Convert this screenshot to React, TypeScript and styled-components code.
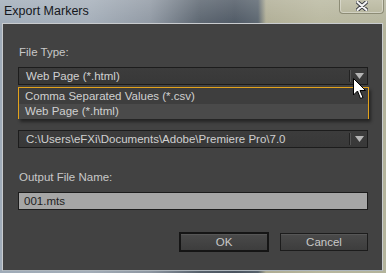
import React from "react";
import styled, { createGlobalStyle } from "styled-components";

const Global = createGlobalStyle`
  html, body { margin: 0; padding: 0; }
  body { width: 386px; height: 273px; overflow: hidden; font-family: "Liberation Sans", Arial, sans-serif; }
`;

const Window = styled.div`
  position: relative;
  width: 386px;
  height: 273px;
  box-sizing: border-box;
  display: flex;
  flex-direction: column;
  background:
    linear-gradient(180deg, rgba(255,255,255,0.18) 0px, rgba(255,255,255,0) 30px),
    linear-gradient(90deg, #9fabb8 0px, #a2acb7 90px, #8d96a1 150px, #56606b 200px, #4a5460 235px, #56616b 258px, #aeac93 266px, #b7b69d 320px, #b3b39b 386px);
  padding: 0 3px 2px 2px;
`;

const TitleBar = styled.div`
  height: 23px;
  display: flex;
  align-items: flex-start;
  justify-content: space-between;
  flex-shrink: 0;
`;

const Title = styled.div`
  font-family: "Liberation Sans", Arial, sans-serif;
  font-size: 12.5px;
  color: #15171c;
  padding: 3px 0 0 2px;
  line-height: 16px;
`;

const CloseButton = styled.div`
  width: 45px;
  height: 15px;
  margin-top: -1px;
  margin-right: -1px;
  box-sizing: border-box;
  border: 1px solid #8d8c76;
  border-top: none;
  border-radius: 0 0 4px 4px;
  background: linear-gradient(180deg, #c6c5b0 0%, #b9b8a0 100%);
  box-shadow: inset 0 0 0 1px rgba(255,255,255,0.35);
  display: flex;
  align-items: center;
  justify-content: center;
`;

const Body = styled.div`
  flex: 1;
  position: relative;
  background: #424242;
  border: 1px solid #c9cccf;
  border-bottom-color: #aeb6bd;
  padding: 21px 14px 0 15px;
  display: flex;
  flex-direction: column;
`;

const Field = styled.div<{ $top: number }>`
  position: relative;
  display: flex;
  flex-direction: column;
  gap: 8px;
  margin-top: ${(p) => p.$top}px;
`;

const Label = styled.div`
  font-size: 11.5px;
  line-height: 14px;
  color: #c8c8c8;
  padding-left: 1px;
`;

const SelectBox = styled.div`
  height: 18px;
  box-sizing: border-box;
  border: 1px solid #1c1c1c;
  background: linear-gradient(180deg, #3c3c3c 0%, #383838 100%);
  display: flex;
  align-items: center;
  font-size: 11.5px;
  color: #d0d0d0;
`;

const SelectText = styled.div`
  flex: 1;
  padding-left: 7px;
  white-space: nowrap;
  overflow: hidden;
`;

const Separator = styled.div`
  width: 1px;
  height: 12px;
  background: #222;
  border-right: 1px solid #555;
`;

const Arrow = styled.div`
  width: 16px;
  display: flex;
  justify-content: center;
  align-items: center;
`;

const DropList = styled.div`
  position: absolute;
  left: 0;
  top: 42px;
  right: -1px;
  height: 32px;
  box-sizing: border-box;
  border: 1px solid #e3a21a;
  box-shadow: 2px 3px 3px rgba(0,0,0,0.45);
  background: #3d3d3d;
  z-index: 2;
  display: flex;
  flex-direction: column;
  padding-top: 1px;
`;

const DropItem = styled.div<{ $hi?: boolean }>`
  height: 15px;
  line-height: 15px;
  font-size: 11.5px;
  color: #d0d0d0;
  padding-left: 6px;
  background: ${(p) => (p.$hi ? "#4a4a4a" : "#3e3e3e")};
  white-space: nowrap;
`;

const Input = styled.div`
  height: 18px;
  box-sizing: border-box;
  border: 1px solid #1c1c1c;
  background: #a6a6a6;
  font-size: 11.5px;
  color: #1e1e1e;
  line-height: 16px;
  padding-left: 5px;
`;

const ButtonRow = styled.div`
  display: flex;
  justify-content: flex-end;
  gap: 11px;
  margin-top: 22px;
`;

const Button = styled.div<{ $default?: boolean }>`
  width: ${(p) => (p.$default ? 90 : 88)}px;
  height: ${(p) => (p.$default ? 20 : 18)}px;
  margin-top: ${(p) => (p.$default ? 0 : 1)}px;
  box-sizing: border-box;
  border: ${(p) => (p.$default ? "2px solid #151515" : "1px solid #1c1c1c")};
  background: linear-gradient(180deg, #4a4a4a 0%, #3d3d3d 100%);
  box-shadow: inset 0 1px 0 #565656;
  color: #c8c8c8;
  font-size: 11.5px;
  display: flex;
  align-items: center;
  justify-content: center;
`;

const Cursor = styled.svg`
  position: absolute;
  left: 353px;
  top: 78px;
  z-index: 5;
`;

const DownArrow = () => (
  <svg width="9" height="6" viewBox="0 0 9 6">
    <path d="M0 0 H9 L4.5 6 Z" fill="#b5b5b5" />
  </svg>
);

export default function App() {
  return (
    <>
      <Global />
      <Window>
        <TitleBar>
          <Title>Export Markers</Title>
          <CloseButton>
            <svg width="12" height="10" viewBox="0 0 12 10">
              <path d="M1.5 1 L10.5 9 M10.5 1 L1.5 9" stroke="#3a3c44" strokeWidth="4" strokeLinecap="round" />
              <path d="M1.5 1 L10.5 9 M10.5 1 L1.5 9" stroke="#f4f4f4" strokeWidth="2.2" strokeLinecap="round" />
            </svg>
          </CloseButton>
        </TitleBar>
        <Body>
          <Field $top={0}>
            <Label>File Type:</Label>
            <SelectBox>
              <SelectText>Web Page (*.html)</SelectText>
              <Separator />
              <Arrow>
                <DownArrow />
              </Arrow>
            </SelectBox>
            <DropList>
              <DropItem>Comma Separated Values (*.csv)</DropItem>
              <DropItem $hi>Web Page (*.html)</DropItem>
            </DropList>
          </Field>
          <Field $top={45}>
            <SelectBox>
              <SelectText>C:\Users\eFXi\Documents\Adobe\Premiere Pro\7.0</SelectText>
              <Separator />
              <Arrow>
                <DownArrow />
              </Arrow>
            </SelectBox>
          </Field>
          <Field $top={22}>
            <Label>Output File Name:</Label>
            <Input>001.mts</Input>
          </Field>
          <ButtonRow>
            <Button $default>OK</Button>
            <Button>Cancel</Button>
          </ButtonRow>
        </Body>
        <Cursor width="14" height="23" viewBox="0 0 14 23">
          <path d="M0.5 0.5 L0.5 17 L4.5 13 L7.5 20.5 L10 19.5 L7 12.5 L12.5 12.5 Z" fill="#ffffff" stroke="#000000" strokeWidth="1" strokeLinejoin="miter" />
        </Cursor>
      </Window>
    </>
  );
}
